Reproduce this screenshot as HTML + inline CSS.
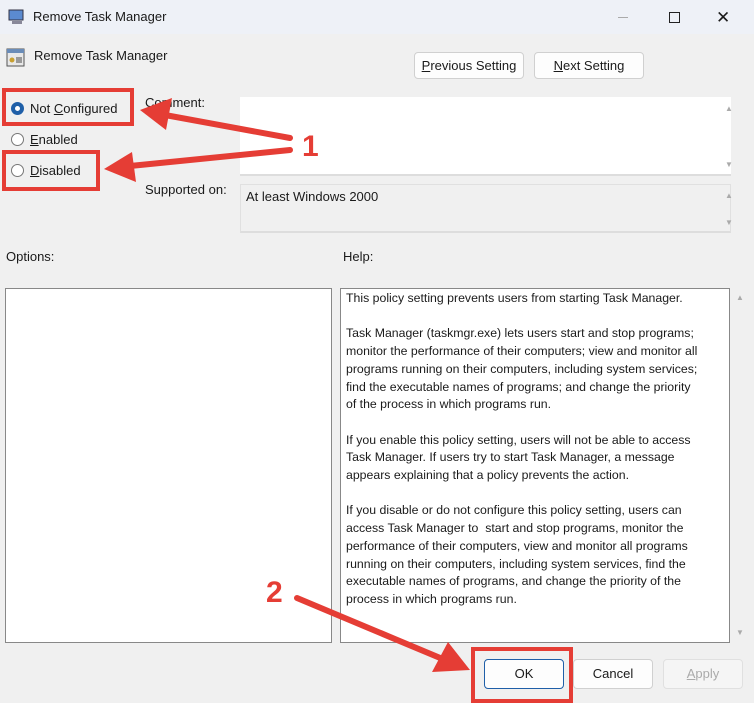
<!DOCTYPE html>
<html><head><meta charset="utf-8"><style>
*{margin:0;padding:0;box-sizing:border-box}
body{width:754px;height:700px;background:#f0f0f0;font-family:"Liberation Sans",sans-serif;font-size:13px;color:#1a1a1a;position:relative;overflow:hidden}
.a{position:absolute;white-space:nowrap}
.btn{position:absolute;background:#fdfdfd;border:1px solid #d0d0d0;border-radius:4px;text-align:center;font-size:13px}
.rad{position:absolute;width:13px;height:13px;border:1px solid #777;border-radius:50%;background:#fff}
.red{position:absolute;border:4px solid #e53d35}
u{text-decoration:underline}
</style></head><body>
<div class="a" style="left:0;top:0;width:754px;height:34px;background:#eef1f7"></div>
<svg class="a" style="left:8px;top:9px" width="18" height="16"><rect x="1" y="1" width="14" height="10" fill="#5b8bd0" stroke="#334"/><rect x="4" y="12" width="10" height="3" fill="#889"/></svg>
<div class="a" style="left:33px;top:9px;font-size:13px">Remove Task Manager</div>
<div class="a" style="left:618px;top:17px;width:10px;height:1px;background:#aaa"></div>
<div class="a" style="left:669px;top:12px;width:11px;height:11px;border:1px solid #222"></div>
<div class="a" style="left:716px;top:8px;font-size:17px">✕</div>
<svg class="a" style="left:6px;top:48px" width="20" height="19"><rect x="1" y="1" width="17" height="17" fill="#e8e8e8" stroke="#555"/><rect x="1" y="1" width="17" height="4" fill="#6a8cb8"/><circle cx="6" cy="12" r="2.5" fill="#c8a030"/><rect x="10" y="9" width="6" height="6" fill="#999"/></svg>
<div class="a" style="left:34px;top:48px">Remove Task Manager</div>
<div class="btn" style="left:414px;top:52px;width:110px;height:27px;line-height:25px"><u>P</u>revious Setting</div>
<div class="btn" style="left:534px;top:52px;width:110px;height:27px;line-height:25px"><u>N</u>ext Setting</div>
<div class="rad" style="left:11px;top:102px;border:4px solid #1f5fa8"></div>
<div class="a" style="left:30px;top:101px">Not <u>C</u>onfigured</div>
<div class="rad" style="left:11px;top:133px"></div>
<div class="a" style="left:30px;top:132px"><u>E</u>nabled</div>
<div class="rad" style="left:11px;top:164px"></div>
<div class="a" style="left:30px;top:163px"><u>D</u>isabled</div>
<div class="red" style="left:2px;top:88px;width:132px;height:38px"></div>
<div class="red" style="left:2px;top:150px;width:98px;height:41px"></div>
<div class="a" style="left:145px;top:95px">Comment:</div>
<div class="a" style="left:240px;top:97px;width:491px;height:79px;background:#fff;border-bottom:2px solid #ddd"></div>
<div class="a" style="left:725px;top:104px;font-size:8px;color:#aaa">▲</div>
<div class="a" style="left:725px;top:160px;font-size:8px;color:#aaa">▼</div>
<div class="a" style="left:145px;top:182px">Supported on:</div>
<div class="a" style="left:240px;top:184px;width:491px;height:49px;border:1px solid #e0e0e0;border-bottom:2px solid #ddd"></div>
<div class="a" style="left:246px;top:189px">At least Windows 2000</div>
<div class="a" style="left:725px;top:191px;font-size:8px;color:#aaa">▲</div>
<div class="a" style="left:725px;top:218px;font-size:8px;color:#aaa">▼</div>
<div class="a" style="left:6px;top:249px">Options:</div>
<div class="a" style="left:343px;top:249px">Help:</div>
<div class="a" style="left:5px;top:288px;width:327px;height:355px;background:#fff;border:1px solid #888"></div>
<div class="a" style="left:340px;top:288px;width:390px;height:355px;background:#fff;border:1px solid #888"></div>
<div class="a" style="left:736px;top:293px;font-size:8px;color:#aaa">▲</div>
<div class="a" style="left:736px;top:628px;font-size:8px;color:#aaa">▼</div>
<div class="a" style="left:346px;top:290px;font-size:12.3px;line-height:17.7px;white-space:pre">This policy setting prevents users from starting Task Manager.

Task Manager (taskmgr.exe) lets users start and stop programs;
monitor the performance of their computers; view and monitor all
programs running on their computers, including system services;
find the executable names of programs; and change the priority
of the process in which programs run.

If you enable this policy setting, users will not be able to access
Task Manager. If users try to start Task Manager, a message
appears explaining that a policy prevents the action.

If you disable or do not configure this policy setting, users can
access Task Manager to  start and stop programs, monitor the
performance of their computers, view and monitor all programs
running on their computers, including system services, find the
executable names of programs, and change the priority of the
process in which programs run.</div>
<div class="btn" style="left:484px;top:659px;width:80px;height:30px;line-height:28px;border:1px solid #1f5fa8">OK</div>
<div class="btn" style="left:573px;top:659px;width:80px;height:30px;line-height:28px">Cancel</div>
<div class="btn" style="left:663px;top:659px;width:80px;height:30px;line-height:28px;color:#aaa;background:#f5f5f5;border-color:#e0e0e0"><u>A</u>pply</div>
<div class="red" style="left:471px;top:647px;width:102px;height:56px"></div>
<svg class="a" style="left:0;top:0" width="754" height="700">
<g stroke="#e53d35" stroke-width="6" stroke-linecap="round" fill="#e53d35">
<line x1="290" y1="138" x2="165" y2="115"/>
<line x1="290" y1="150" x2="130" y2="166"/>
<line x1="297" y1="598" x2="445" y2="660"/>
</g>
<g fill="#e53d35">
<polygon points="140,110 172,98 166,130"/>
<polygon points="104,169 132,152 136,182"/>
<polygon points="470,670 432,672 448,642"/>
</g>
<text x="302" y="156" font-family="Liberation Sans" font-weight="bold" font-size="30" fill="#e53d35">1</text>
<text x="266" y="602" font-family="Liberation Sans" font-weight="bold" font-size="30" fill="#e53d35">2</text>
</svg>
</body></html>
